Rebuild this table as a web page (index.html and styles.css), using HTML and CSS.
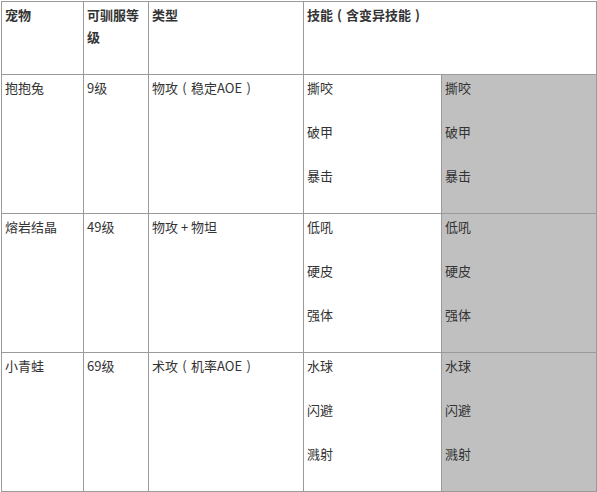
FILE: index.html
```html
<!DOCTYPE html>
<html lang="zh">
<head>
<meta charset="utf-8">
<link rel="stylesheet" href="styles.css">
</head>
<body>
<table class="pets">
  <colgroup>
    <col class="c1"><col class="c2"><col class="c3"><col class="c4"><col class="c5">
  </colgroup>
  <tr class="head">
    <th>宠物</th>
    <th>可驯服等级</th>
    <th>类型</th>
    <th colspan="2">技能<span class="paren">(</span>含变异技能<span class="paren">)</span></th>
  </tr>
  <tr>
    <td>抱抱兔</td>
    <td>9级</td>
    <td>物攻<span class="paren">(</span>稳定AOE<span class="paren">)</span></td>
    <td class="skills"><p>撕咬</p><p>破甲</p><p>暴击</p></td>
    <td class="skills grey"><p>撕咬</p><p>破甲</p><p>暴击</p></td>
  </tr>
  <tr>
    <td>熔岩结晶</td>
    <td>49级</td>
    <td>物攻 + 物坦</td>
    <td class="skills"><p>低吼</p><p>硬皮</p><p>强体</p></td>
    <td class="skills grey"><p>低吼</p><p>硬皮</p><p>强体</p></td>
  </tr>
  <tr>
    <td>小青蛙</td>
    <td>69级</td>
    <td>术攻<span class="paren">(</span>机率AOE<span class="paren">)</span></td>
    <td class="skills"><p>水球</p><p>闪避</p><p>溅射</p></td>
    <td class="skills grey"><p>水球</p><p>闪避</p><p>溅射</p></td>
  </tr>
</table>
</body>
</html>
```
FILE: styles.css
```css
html, body {
  margin: 0;
  padding: 0;
  background: #fff;
}
body {
  padding: 1px 0 0 1px;
  font-family: "Microsoft YaHei", "Noto Sans CJK SC", "Noto Sans", sans-serif;
  font-size: 13px;
  line-height: 22px;
  color: #333;
}
.pets {
  border-collapse: collapse;
  table-layout: fixed;
  width: 595px;
}
.c1 { width: 82px; }
.c2 { width: 65px; }
.c3 { width: 155px; }
.c4 { width: 138px; }
.c5 { width: 155px; }
.pets th, .pets td {
  border: 1px solid #9a9a9a;
  padding: 2px 3px 4px;
  vertical-align: top;
  text-align: left;
}
.pets th {
  font-weight: bold;
  color: #333;
}
.paren {
  display: inline-block;
  width: 1em;
  text-align: center;
}
.head { height: 73px; }
.skills p {
  margin: 0 0 22px;
}
.grey { background: #c0c0c0; }
```
